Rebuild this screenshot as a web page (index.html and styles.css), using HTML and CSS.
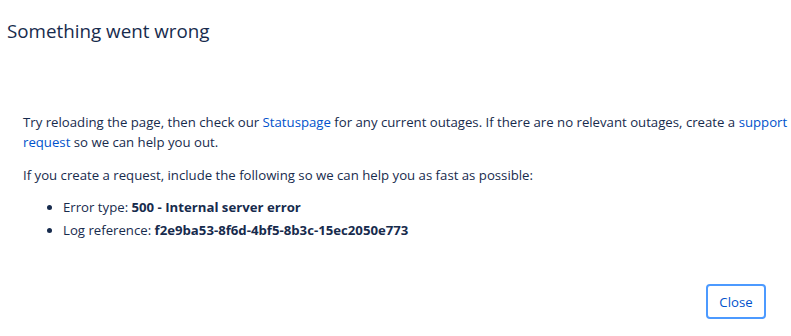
FILE: index.html
```html
<!DOCTYPE html>
<html>
<head>
<meta charset="utf-8">
<link rel="stylesheet" href="styles.css">
</head>
<body>
<div class="dialog">
  <header class="header">
    <h1 class="title">Something went wrong</h1>
  </header>
  <div class="body">
    <p class="para">Try reloading the page, then check our <a class="link" href="#">Statuspage</a> for any current outages. If there are no relevant outages, create a <a class="link" href="#">support request</a> so we can help you out.</p>
    <p class="para para-last">If you create a request, include the following so we can help you as fast as possible:</p>
    <ul class="list">
      <li class="item">Error type: <strong>500 - Internal server error</strong></li>
      <li class="item">Log reference: <strong>f2e9ba53-8f6d-4bf5-8b3c-15ec2050e773</strong></li>
    </ul>
  </div>
  <footer class="footer">
    <button class="btn">Close</button>
  </footer>
</div>
</body>
</html>
```
FILE: styles.css
```css
html, body {
  margin: 0;
  padding: 0;
  background: #ffffff;
}
body {
  font-family: "Open Sans", "Noto Sans", sans-serif;
  color: #172B4D;
  width: 791px;
  height: 336px;
  overflow: hidden;
}
.dialog {
  display: flex;
  flex-direction: column;
}
.header {
  padding: 17px 7px 0;
}
.title {
  margin: 0;
  font-size: 18.8px;
  font-weight: 400;
  line-height: 28px;
  color: #172B4D;
}
.body {
  padding: 67px 0 0 23px;
  width: 775px;
  font-size: 13.2px;
  line-height: 20px;
}
.para {
  margin: 0 0 13px;
}
.para-last {
  margin-bottom: 12px;
}
.link {
  color: #0052CC;
  text-decoration: none;
}
.list {
  margin: 0;
  padding-left: 40px;
}
.item + .item {
  margin-top: 3px;
}
.item strong {
  font-weight: 700;
}
.footer {
  display: flex;
  justify-content: flex-end;
  padding: 44px 25px 0 0;
}
.btn {
  font-family: inherit;
  font-size: 13.2px;
  color: #0052CC;
  background: #ffffff;
  border: 2px solid #4C9AFF;
  border-radius: 4px;
  width: 60px;
  height: 35px;
  padding: 0;
}
```
